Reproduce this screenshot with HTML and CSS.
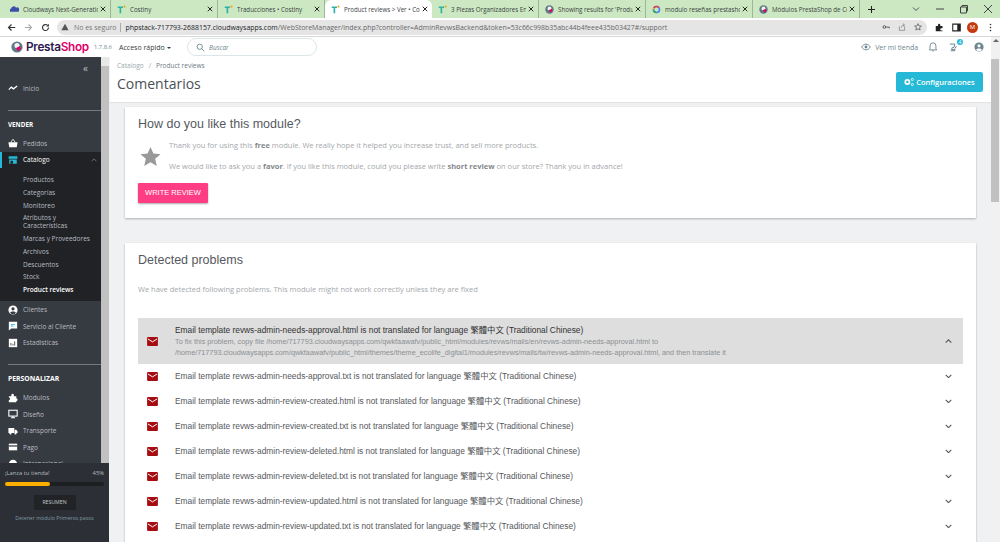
FILE: index.html
```html
<!DOCTYPE html>
<html lang="en">
<head>
    <meta charset="UTF-8">
    <title>Product reviews</title>
    <link rel="stylesheet" href="styles.css">
</head>
<body>
    <svg class="sprites" width="0" height="0">
        <symbol id="t-logo" viewBox="0 0 12 12"><path d="M1 2h7v2H5.6v7H3.4V4H1z" fill="#2bb3a8"/><circle cx="10" cy="2" r="1.5" fill="#f5a623"/></symbol>
        <symbol id="ps-logo" viewBox="0 0 12 12"><circle cx="6" cy="6" r="5.6" fill="#5f7a85"/><circle cx="6" cy="4.6" r="2.6" fill="#f4f4f4"/><path d="M5 7l4-2 1 3-3 2z" fill="#df0067"/></symbol>
        <symbol id="close" viewBox="0 0 8 8"><path d="M1 1l6 6M7 1L1 7" stroke="#222" stroke-width="1.3" fill="none"/></symbol>
        <symbol id="mail" viewBox="0 0 12 10"><rect width="12" height="10" rx="1" fill="#a50d12"/><path d="M1 2.2l5 3.2 5-3.2" stroke="#fff" stroke-width="1.1" fill="none"/></symbol>
        <symbol id="chev" viewBox="0 0 10 6"><path d="M1 1l4 4 4-4" stroke="#555" stroke-width="1.5" fill="none"/></symbol>
    </svg>

    <div class="tabs">
        <div class="tab"><svg class="tab-icon" viewBox="0 0 12 12"><path d="M1 9a2 2 0 0 1 .5-4A3.5 3.5 0 0 1 8 3.5 3 3 0 0 1 11 9z" fill="#3c4fa8"/></svg><span class="tab-title">Cloudways Next-Generatio</span><svg class="tab-x"><use href="#close"/></svg></div>
        <div class="tab"><svg class="tab-icon"><use href="#t-logo"/></svg><span class="tab-title">Costiny</span><svg class="tab-x"><use href="#close"/></svg></div>
        <div class="tab"><svg class="tab-icon"><use href="#t-logo"/></svg><span class="tab-title">Traducciones • Costiny</span><svg class="tab-x"><use href="#close"/></svg></div>
        <div class="tab active"><svg class="tab-icon"><use href="#t-logo"/></svg><span class="tab-title">Product reviews &gt; Ver • Co</span><svg class="tab-x"><use href="#close"/></svg></div>
        <div class="tab"><svg class="tab-icon"><use href="#t-logo"/></svg><span class="tab-title">3 Piezas Organizadores En</span><svg class="tab-x"><use href="#close"/></svg></div>
        <div class="tab"><svg class="tab-icon"><use href="#ps-logo"/></svg><span class="tab-title">Showing results for 'Produ</span><svg class="tab-x"><use href="#close"/></svg></div>
        <div class="tab"><svg class="tab-icon" viewBox="0 0 12 12"><circle cx="6" cy="6" r="4" fill="none" stroke="#4285f4" stroke-width="2.2"/><path d="M2.5 4A4 4 0 0 1 9 3.3" fill="none" stroke="#ea4335" stroke-width="2.2"/><path d="M2.3 7.6A4 4 0 0 0 6 10" fill="none" stroke="#34a853" stroke-width="2.2"/><path d="M2 6c0-.7 0-1 .4-1.8" fill="none" stroke="#fbbc05" stroke-width="2.2"/></svg><span class="tab-title">modulo reseñas prestasho</span><svg class="tab-x"><use href="#close"/></svg></div>
        <div class="tab"><svg class="tab-icon"><use href="#ps-logo"/></svg><span class="tab-title">Módulos PrestaShop de Co</span><svg class="tab-x"><use href="#close"/></svg></div>
        <svg class="tab-plus" viewBox="0 0 8 8"><path d="M4 0v8M0 4h8" stroke="#222" stroke-width="1.2"/></svg>
        <div class="win-controls">
            <svg viewBox="0 0 10 10"><path d="M2 3.5l3 3 3-3" stroke="#555" fill="none"/></svg>
            <svg viewBox="0 0 10 10"><path d="M1 5h8" stroke="#444"/></svg>
            <svg viewBox="0 0 10 10"><path d="M1.5 3h6v6h-6zM3 3V1.5h5.5V7H7.5" stroke="#444" fill="none"/></svg>
            <svg viewBox="0 0 10 10"><path d="M1 1l8 8M9 1l-8 8" stroke="#444" fill="none"/></svg>
        </div>
    </div>

    <div class="toolbar">
        <svg class="nav-icon" viewBox="0 0 12 12"><path d="M11 6H2M6 2L2 6l4 4" stroke="#333" stroke-width="1.5" fill="none"/></svg>
        <svg class="nav-icon" viewBox="0 0 12 12"><path d="M1 6h9M6 2l4 4-4 4" stroke="#aaa" stroke-width="1.5" fill="none"/></svg>
        <svg class="nav-icon" viewBox="0 0 12 12"><path d="M10 6a4 4 0 1 1-1.2-2.8" stroke="#333" stroke-width="1.5" fill="none"/><path d="M10.500 1v3.500H7z" fill="#333"/></svg>
        <div class="omnibox">
            <svg class="warn" viewBox="0 0 10 10"><path d="M5 1l4.500 8h-9z" fill="#555"/></svg>
            <span class="insecure">No es seguro</span>
            <span class="omni-sep"></span>
            <span class="url"><b>phpstack-717793-2688157.cloudwaysapps.com</b>/WebStoreManager/index.php?controller=AdminRevwsBackend&amp;token=53c66c998b35abc44b4feee435b03427#/support</span>
            <svg class="omni-icon" viewBox="0 0 12 12"><circle cx="3.500" cy="6" r="2" fill="none" stroke="#555" stroke-width="1.400"/><path d="M5.500 6H11V8M9 6v1.500" stroke="#555" stroke-width="1.200" fill="none"/></svg>
            <svg class="omni-icon" viewBox="0 0 12 12"><path d="M2 5v6h8V5M5 7c0-3 2-4 4-4M7.500 1L10 3 7.500 5" stroke="#777" fill="none"/></svg>
            <svg class="omni-icon" viewBox="0 0 12 12"><path d="M6 1l1.500 3.400 3.600.3-2.800 2.300.9 3.600L6 8.700 2.800 10.600l.9-3.600L.9 4.700l3.600-.3z" stroke="#444" fill="none"/></svg>
        </div>
        <svg class="bar-icon" viewBox="0 0 12 12"><path d="M1 4h3V2.500a1.500 1.500 0 0 1 3 0V4h3v3H8.500a1.500 1.500 0 0 0 0 3H10v1H1z" fill="#222"/></svg>
        <svg class="bar-icon" viewBox="0 0 12 12"><path d="M1 1.500h10v9H1z" fill="none" stroke="#222" stroke-width="1.400"/><path d="M7 1.500h4v9H7z" fill="#222"/></svg>
        <span class="avatar">M</span>
        <svg class="bar-icon" viewBox="0 0 12 12"><circle cx="6" cy="2" r="1.100" fill="#333"/><circle cx="6" cy="6" r="1.100" fill="#333"/><circle cx="6" cy="10" r="1.100" fill="#333"/></svg>
    </div>

    <div class="shell">
        <div class="shell-col">
            <header class="ps-header">
                <svg class="ps-mark"><use href="#ps-logo"/></svg>
                <span class="brand">Presta<em>Shop</em></span>
                <span class="version">1.7.8.6</span>
                <span class="quick">Acceso rápido <i class="caret"></i></span>
                <div class="search">
                    <svg viewBox="0 0 12 12"><circle cx="5" cy="5" r="3.500" fill="none" stroke="#6c868e" stroke-width="1.200"/><path d="M7.500 7.500L11 11" stroke="#6c868e" stroke-width="1.200"/></svg>
                    <span>Buscar</span>
                </div>
                <div class="header-right">
                    <svg class="eye" viewBox="0 0 14 10"><path d="M1 5c3-5.300 9-5.300 12 0-3 5.300-9 5.300-12 0z" fill="none" stroke="#6c868e" stroke-width="1.300"/><circle cx="7" cy="5" r="2" fill="#6c868e"/></svg>
                    <span class="store-link">Ver mi tienda</span>
                    <svg class="head-icon bell" viewBox="0 0 12 12"><path d="M6 1a3.500 3.500 0 0 0-3.500 3.500V8L1.500 9.500h9L9.500 8V4.500A3.500 3.500 0 0 0 6 1zM5 10.500h2" fill="none" stroke="#6c868e" stroke-width="1.100"/></svg>
                    <span class="trophy">
                        <svg class="head-icon" viewBox="0 0 12 12"><path d="M1 2.500h6L6 6.500H4L3 9h4v1.500H2M9 5l-2 3" fill="none" stroke="#6c868e" stroke-width="1.200"/></svg>
                        <i class="badge">4</i>
                    </span>
                    <svg class="head-icon user" viewBox="0 0 12 12"><circle cx="6" cy="6" r="5.500" fill="#6c868e"/><circle cx="6" cy="4.600" r="1.900" fill="#fff"/><path d="M2.500 9.500c1-2.300 6-2.300 7 0a5 5 0 0 1-7 0z" fill="#fff"/></svg>
                </div>
            </header>

            <div class="layout">
                <aside class="sidebar">
                    <div class="side-scroll">
                        <nav class="side-nav">
                            <div class="collapse">«</div>
                            <a class="nav-row top-row">
                                <svg viewBox="0 0 12 12"><path d="M1 8l3-3 2.500 2L11 3.500" stroke="#fff" stroke-width="1.500" fill="none"/></svg>Inicio
                            </a>
                            <div class="side-title first">VENDER</div>
                            <a class="nav-row">
                                <svg viewBox="0 0 12 12"><path d="M0.500 5h11l-1 6h-9z" fill="#fff"/><path d="M3.500 5L6 1.500 8.500 5" stroke="#fff" fill="none"/></svg>Pedidos
                            </a>
                            <div class="open-group">
                                <a class="nav-row current">
                                    <svg viewBox="0 0 12 12"><path d="M1 1.500h10l.5 3h-11zM1.500 5.500h9v5h-9z" fill="#25b9d7"/><path d="M3 7h3v3.500H3z" fill="#1f2125"/></svg>Catalogo
                                    <svg class="up" viewBox="0 0 10 6"><path d="M1 5l4-4 4 4" stroke="#777" stroke-width="1.500" fill="none"/></svg>
                                </a>
                                <ul class="sub-nav">
                                    <li>Productos</li>
                                    <li>Categorías</li>
                                    <li>Monitoreo</li>
                                    <li>Atributos y Características</li>
                                    <li>Marcas y Proveedores</li>
                                    <li>Archivos</li>
                                    <li>Descuentos</li>
                                    <li>Stock</li>
                                    <li class="on">Product reviews</li>
                                </ul>
                            </div>
                            <a class="nav-row">
                                <svg viewBox="0 0 12 12"><circle cx="6" cy="6" r="5.500" fill="#fff"/><circle cx="6" cy="4.600" r="1.900" fill="#363a41"/><path d="M2.500 9.500c1-2.300 6-2.300 7 0a5 5 0 0 1-7 0z" fill="#363a41"/></svg>Clientes
                            </a>
                            <a class="nav-row">
                                <svg viewBox="0 0 12 12"><path d="M1 1h10v8H4l-3 2.500z" fill="#fff"/><path d="M3.500 3.500h5v1h-5zM3.500 5.500h3v1h-3z" fill="#25b9d7"/></svg>Servicio al Cliente
                            </a>
                            <a class="nav-row">
                                <svg viewBox="0 0 12 12"><rect x="1" y="1" width="10" height="10" fill="#fff"/><path d="M3.500 6v3M6 7v2M8 4v5" stroke="#363a41"/></svg>Estadísticas
                            </a>
                            <div class="side-title">PERSONALIZAR</div>
                            <a class="nav-row">
                                <svg viewBox="0 0 12 12"><path d="M1 4h3V2.500a1.500 1.500 0 0 1 3 0V4h3v2.500a1.500 1.500 0 0 1 0 3V11H1V8.500a1.500 1.500 0 0 0 0-3z" fill="#fff"/></svg>Modulos
                            </a>
                            <a class="nav-row">
                                <svg viewBox="0 0 12 12"><rect x="1" y="1.500" width="10" height="7" fill="none" stroke="#fff" stroke-width="1.300"/><path d="M3.500 10.500h5M6 8.500v2" stroke="#fff" stroke-width="1.300"/></svg>Diseño
                            </a>
                            <a class="nav-row">
                                <svg viewBox="0 0 12 12"><path d="M0.500 2.500h7v6h-7zM8 4.500h2l1.500 2v2H8z" fill="#fff"/><circle cx="3" cy="9" r="1.300" fill="#fff"/><circle cx="9" cy="9" r="1.300" fill="#fff"/></svg>Transporte
                            </a>
                            <a class="nav-row">
                                <svg viewBox="0 0 12 12"><rect x="1" y="2" width="10" height="8" fill="#fff"/><rect x="1" y="4" width="10" height="1.500" fill="#363a41"/></svg>Pago
                            </a>
                            <a class="nav-row">
                                <svg viewBox="0 0 12 12"><circle cx="6" cy="6" r="5" fill="#fff"/></svg>Internacional
                            </a>
                        </nav>
                        <div class="side-bar"><span class="side-thumb"></span></div>
                    </div>
                    <div class="onboarding">
                        <div class="launch"><span>¡Lanza tu tienda!</span><span>45%</span></div>
                        <div class="progress"><span class="progress-fill"></span></div>
                        <div class="resume">RESUMEN</div>
                        <div class="stop">Detener módulo Primeros pasos</div>
                    </div>
                </aside>

                <main class="main">
                    <div class="page-head">
                        <div class="crumbs"><span>Catalogo</span><span class="slash">/</span><span class="crumb-now">Product reviews</span></div>
                        <div class="title-row">
                            <h1>Comentarios</h1>
                            <a class="config-btn">
                                <svg viewBox="0 0 12 12"><circle cx="4" cy="6" r="2.500" fill="none" stroke="#fff" stroke-width="2"/><circle cx="10" cy="3" r="1.300" fill="none" stroke="#fff"/><circle cx="10" cy="9" r="1.300" fill="none" stroke="#fff"/></svg>
                                Configuraciones
                            </a>
                        </div>
                    </div>

                    <section class="card rate-card">
                        <h2>How do you like this module?</h2>
                        <div class="rate-body">
                            <svg class="big-star" viewBox="0 0 24 24"><path d="M12 1l3.300 7.600 8.200.7-6.200 5.400 1.900 8.100L12 18.500l-7.200 4.300 1.900-8.100L.5 9.300l8.200-.7z" fill="#999"/></svg>
                            <div class="rate-text">
                                <p>Thank you for using this <b>free</b> module. We really hope it helped you increase trust, and sell more products.</p>
                                <p>We would like to ask you a <b>favor</b>. If you like this module, could you please write <b>short review</b> on our store? Thank you in advance!</p>
                            </div>
                        </div>
                        <a class="review-btn">WRITE REVIEW</a>
                    </section>

                    <section class="card problems-card">
                        <h2>Detected problems</h2>
                        <p class="problems-intro">We have detected following problems. This module might not work correctly unless they are fixed</p>
                        <div class="problem open">
                            <svg class="mail"><use href="#mail"/></svg>
                            <div class="problem-text">
                                <div class="problem-title">Email template revws-admin-needs-approval.html is not translated for language 繁體中文 (Traditional Chinese)</div>
                                <div class="problem-help">To fix this problem, copy file /home/717793.cloudwaysapps.com/qwkfaawafv/public_html/modules/revws/mails/en/revws-admin-needs-approval.html to<br>/home/717793.cloudwaysapps.com/qwkfaawafv/public_html/themes/theme_ecolife_digital1/modules/revws/mails/tw/revws-admin-needs-approval.html, and then translate it</div>
                            </div>
                            <svg class="chev flip"><use href="#chev"/></svg>
                        </div>
                        <div class="problem"><svg class="mail"><use href="#mail"/></svg><div class="problem-title">Email template revws-admin-needs-approval.txt is not translated for language 繁體中文 (Traditional Chinese)</div><svg class="chev"><use href="#chev"/></svg></div>
                        <div class="problem"><svg class="mail"><use href="#mail"/></svg><div class="problem-title">Email template revws-admin-review-created.html is not translated for language 繁體中文 (Traditional Chinese)</div><svg class="chev"><use href="#chev"/></svg></div>
                        <div class="problem"><svg class="mail"><use href="#mail"/></svg><div class="problem-title">Email template revws-admin-review-created.txt is not translated for language 繁體中文 (Traditional Chinese)</div><svg class="chev"><use href="#chev"/></svg></div>
                        <div class="problem"><svg class="mail"><use href="#mail"/></svg><div class="problem-title">Email template revws-admin-review-deleted.html is not translated for language 繁體中文 (Traditional Chinese)</div><svg class="chev"><use href="#chev"/></svg></div>
                        <div class="problem"><svg class="mail"><use href="#mail"/></svg><div class="problem-title">Email template revws-admin-review-deleted.txt is not translated for language 繁體中文 (Traditional Chinese)</div><svg class="chev"><use href="#chev"/></svg></div>
                        <div class="problem"><svg class="mail"><use href="#mail"/></svg><div class="problem-title">Email template revws-admin-review-updated.html is not translated for language 繁體中文 (Traditional Chinese)</div><svg class="chev"><use href="#chev"/></svg></div>
                        <div class="problem"><svg class="mail"><use href="#mail"/></svg><div class="problem-title">Email template revws-admin-review-updated.txt is not translated for language 繁體中文 (Traditional Chinese)</div><svg class="chev"><use href="#chev"/></svg></div>
                    </section>
                </main>
            </div>
        </div>

        <div class="page-bar"><span class="page-arrow"></span><span class="page-thumb"></span></div>
    </div>
</body>
</html>
```

FILE: styles.css
```css
* {
    box-sizing: border-box;
}
html, body {
    height: 100%;
}
body {
    margin: 0;
    height: 542px;
    overflow: hidden;
    display: flex;
    flex-direction: column;
    background: #eff1f2;
    font-family: "Open Sans", "Noto Sans CJK TC", sans-serif;
    color: #363a41;
}
.sprites {
    position: absolute;
}

/* browser chrome */
.tabs {
    height: 18px;
    flex: none;
    display: flex;
    align-items: center;
    background: #cbe8c2;
    padding-left: 4px;
}
.tab {
    width: 107px;
    height: 18px;
    flex: none;
    display: flex;
    align-items: center;
    padding: 0 4px 0 6px;
    border-right: 1px solid #9fb59a;
    font-size: 6.200px;
    color: #3c4043;
}
.tab.active {
    background: #fff;
    border-right: none;
    border-radius: 6px 6px 0 0;
}
.tab-icon {
    width: 9px;
    height: 9px;
    flex: none;
    margin-right: 4px;
}
.tab-title {
    flex: 1;
    white-space: nowrap;
    overflow: hidden;
}
.tab-x {
    width: 6px;
    height: 6px;
    flex: none;
    margin-left: 2px;
}
.tab-plus {
    width: 7px;
    height: 7px;
    margin-left: 8px;
}
.win-controls {
    margin-left: auto;
    display: flex;
    gap: 14px;
    padding-right: 7px;
}
.win-controls svg {
    width: 10px;
    height: 10px;
}
.toolbar {
    height: 19px;
    flex: none;
    display: flex;
    align-items: center;
    background: #fff;
    border-bottom: 1px solid #d8d8d8;
    padding-left: 7px;
}
.nav-icon {
    width: 9px;
    height: 9px;
    margin-right: 8px;
}
.omnibox {
    width: 870px;
    height: 15px;
    margin-left: -1px;
    display: flex;
    align-items: center;
    background: #e5e5e5;
    border-radius: 8px;
    padding: 0 5px 0 4px;
    font-size: 6.940px;
    color: #666;
    white-space: nowrap;
}
.warn {
    width: 8px;
    height: 8px;
    margin-right: 5px;
}
.insecure {
    color: #777;
}
.omni-sep {
    width: 1px;
    height: 9px;
    background: #aaa;
    margin: 0 4px;
}
.url {
    flex: 1;
    overflow: hidden;
}
.url b {
    font-weight: 400;
    color: #202124;
}
.omni-icon {
    width: 8px;
    height: 8px;
    margin-left: 8px;
}
.bar-icon {
    width: 9px;
    height: 9px;
    margin-left: 8px;
}
.avatar {
    width: 11px;
    height: 11px;
    margin-left: 6px;
    border-radius: 50%;
    background: #c5390f;
    color: #fff;
    font-size: 6px;
    display: flex;
    align-items: center;
    justify-content: center;
}

/* page frame: everything below the browser toolbar, next to the page scrollbar */
.shell {
    flex: 1;
    min-height: 0;
    display: flex;
}
.shell-col {
    width: 991px;
    flex: none;
    display: flex;
    flex-direction: column;
}

/* shop header */
.ps-header {
    height: 20px;
    flex: none;
    display: flex;
    align-items: center;
    background: #fff;
    padding-left: 11px;
}
.ps-mark {
    width: 12px;
    height: 12px;
    margin-right: 3px;
    flex: none;
}
.brand {
    font-family: "Inter", "Open Sans", sans-serif;
    font-size: 11.800px;
    font-weight: 600;
    letter-spacing: -0.3px;
    color: #2c1a4d;
    width: 68px;
    flex: none;
}
.brand em {
    font-style: normal;
    color: #df0067;
}
.version {
    font-size: 5.800px;
    color: #6c868e;
    width: 25px;
    flex: none;
}
.quick {
    font-size: 7px;
    color: #363a41;
    width: 68px;
    flex: none;
}
.caret {
    display: inline-block;
    border: 2px solid transparent;
    border-top-color: #363a41;
    border-bottom: none;
    vertical-align: middle;
}
.search {
    width: 130px;
    height: 18px;
    display: flex;
    align-items: center;
    gap: 4px;
    padding-left: 8px;
    border: 1px solid #dbe6e9;
    border-radius: 9px;
    font-size: 6.500px;
    font-style: italic;
    color: #6c868e;
}
.search svg {
    width: 9px;
    height: 9px;
}
.header-right {
    margin-left: auto;
    display: flex;
    align-items: center;
    padding-right: 7px;
}
.eye {
    width: 10px;
    height: 8px;
    margin-right: 4px;
}
.store-link {
    font-size: 6.900px;
    color: #6c868e;
    margin-right: 10px;
}
.head-icon {
    width: 10px;
    height: 10px;
    display: block;
}
.trophy {
    position: relative;
    margin: 0 15px 0 11px;
}
.badge {
    position: absolute;
    top: -3px;
    right: -4px;
    width: 6px;
    height: 6px;
    border-radius: 50%;
    background: #25b9d7;
    color: #fff;
    font-size: 4.500px;
    font-style: normal;
    line-height: 6px;
    text-align: center;
}

/* page layout */
.layout {
    flex: 1;
    min-height: 0;
    display: flex;
}
.sidebar {
    width: 110px;
    flex: none;
    display: flex;
    flex-direction: column;
    overflow: hidden;
}
.side-scroll {
    height: 406px;
    flex: none;
    display: flex;
    overflow: hidden;
}
.side-nav {
    width: 101px;
    flex: none;
    background: #363a41;
}
.side-bar {
    width: 8px;
    flex: none;
    display: flex;
    flex-direction: column;
    background: #e8e8e8;
    padding-top: 9px;
}
.side-thumb {
    display: block;
    flex: 1;
    background: #c1c1c1;
}
.collapse {
    height: 23px;
    padding: 5px 0 0 83px;
    font-size: 10px;
    line-height: 12px;
    color: #b5bcc0;
}
.nav-row {
    height: 16.600px;
    display: flex;
    align-items: center;
    padding-left: 8px;
    font-size: 6.500px;
    color: #b9bdc1;
}
.nav-row svg {
    width: 10px;
    height: 10px;
    flex: none;
    margin-right: 5px;
}
.top-row {
    margin-bottom: 13.400px;
}
.side-title {
    margin-left: 8px;
    border-top: 1px solid #73797f;
    padding-top: 9px;
    height: 25px;
    font-size: 6.800px;
    font-weight: 700;
    color: #fff;
    line-height: 9px;
}
.side-title.first {
    font-size: 6.300px;
}
.side-nav .side-title:not(.first) {
    margin-top: 13px;
}
.open-group {
    background: #202226;
    padding-bottom: 5px;
}
.current {
    color: #fff;
    box-shadow: inset 2px 0 0 #25b9d7;
    margin-bottom: 5.500px;
}
.nav-row .up {
    width: 6px;
    height: 4px;
    margin: 0 4px 0 auto;
}
.sub-nav {
    list-style: none;
    margin: 0;
    padding: 0 6px 0 23px;
    font-size: 6.500px;
    line-height: 8px;
    color: #b9bdc1;
}
.sub-nav li {
    padding: 2.375px 0;
}
.sub-nav .on {
    color: #fff;
    font-weight: 600;
}
.onboarding {
    width: 109px;
    flex: 1;
    background: #2c2f35;
    padding: 5px 5px 0;
    text-align: center;
}
.launch {
    display: flex;
    justify-content: space-between;
    font-size: 5.800px;
    line-height: 10px;
    color: #b5bcc0;
}
.progress {
    height: 4px;
    margin: 4px 0 9px;
    border-radius: 2px;
    background: #1d1f22;
}
.progress-fill {
    display: block;
    width: 45%;
    height: 100%;
    border-radius: 2px;
    background: #fbaf00;
}
.resume {
    width: 42px;
    height: 15px;
    margin: 0 auto 4px;
    background: #212327;
    font-size: 5.200px;
    line-height: 15px;
    color: #c5c9cc;
}
.stop {
    font-size: 5.200px;
    color: #7f9ba3;
    white-space: nowrap;
}

/* content */
.main {
    width: 881px;
    flex: none;
    overflow: hidden;
}
.page-head {
    height: 45px;
    background: #fff;
    padding: 4px 8px 0 7px;
    box-shadow: 0 1px 1px rgba(0, 0, 0, 0.06);
}
.crumbs {
    font-size: 6.500px;
    line-height: 10px;
    color: #9aa8ad;
}
.slash {
    margin: 0 5px;
}
.crumb-now {
    color: #6c7a80;
}
.title-row {
    display: flex;
    align-items: flex-start;
    justify-content: space-between;
    padding-top: 1px;
}
h1 {
    margin: 2px 0 0;
    font-size: 14px;
    font-weight: 400;
    line-height: 20px;
    color: #4a4f55;
}
.config-btn {
    width: 87px;
    height: 20px;
    display: flex;
    align-items: center;
    justify-content: center;
    gap: 2px;
    border-radius: 2px;
    background: #25b9d7;
    color: #fff;
    font-size: 7.500px;
    font-weight: 600;
}
.config-btn svg {
    width: 10px;
    height: 10px;
}
.card {
    width: 851px;
    margin-left: 15px;
    background: #fff;
    padding: 0 13px;
    box-shadow: 0 1px 2px rgba(0, 0, 0, 0.28);
}
h2 {
    margin: 0;
    font-family: "Liberation Sans", sans-serif;
    font-weight: 400;
    font-size: 12.500px;
    color: #55595e;
}
.rate-card {
    height: 111px;
    margin-top: 5px;
    padding-top: 9px;
}
.rate-card h2 {
    line-height: 16px;
}
.rate-body {
    display: flex;
    align-items: center;
    margin-top: 8px;
}
.big-star {
    width: 21px;
    height: 21px;
    flex: none;
    margin: 0 8px 0 2px;
}
.rate-text {
    font-size: 7.500px;
    line-height: 11px;
    color: #a4a7ab;
}
.rate-text p {
    margin: 0 0 10px;
}
.rate-text p:last-child {
    margin: 0;
}
.rate-text b {
    color: #85888c;
}
.review-btn {
    display: block;
    width: 70px;
    height: 20px;
    margin-top: 11px;
    background: #ff3d84;
    border-radius: 1px;
    box-shadow: 0 1px 2px rgba(0, 0, 0, 0.35);
    font-family: "Liberation Sans", sans-serif;
    font-size: 7.500px;
    line-height: 20px;
    text-align: center;
    color: #fff;
}
.problems-card {
    height: 320px;
    margin-top: 25px;
    padding-top: 9px;
}
.problems-card h2 {
    line-height: 16px;
}
.problems-intro {
    margin: 16px 0 24px;
    font-size: 7.500px;
    line-height: 10px;
    color: #a4a7ab;
}
.problem {
    height: 25px;
    display: flex;
    align-items: center;
    padding: 0 11px 1px 9px;
    font-family: "Liberation Sans", "Noto Sans CJK TC", sans-serif;
}
.problem.open {
    height: 46px;
    padding-bottom: 0;
    background: #dedede;
}
.mail {
    width: 11px;
    height: 9px;
    flex: none;
    margin-right: 17px;
}
.problem-text {
    flex: 1;
}
.problem-title {
    flex: 1;
    font-size: 8.350px;
    line-height: 12px;
    color: #55585c;
    white-space: nowrap;
}
.problem.open .problem-title {
    color: #333;
}
.problem-help {
    font-size: 7.270px;
    line-height: 11px;
    color: #8c8f93;
    white-space: nowrap;
}
.chev {
    width: 7px;
    height: 4.500px;
    flex: none;
}
.chev.flip {
    transform: rotate(180deg);
}
.page-bar {
    width: 9px;
    flex: none;
    background: #f1f1f1;
}
.page-arrow {
    display: block;
    margin: 2px auto 17px;
    width: 6px;
    border: 3px solid transparent;
    border-bottom-color: #666;
    border-top: none;
}
.page-thumb {
    display: block;
    width: 8px;
    height: 143px;
    background: #c1c1c1;
}
```
